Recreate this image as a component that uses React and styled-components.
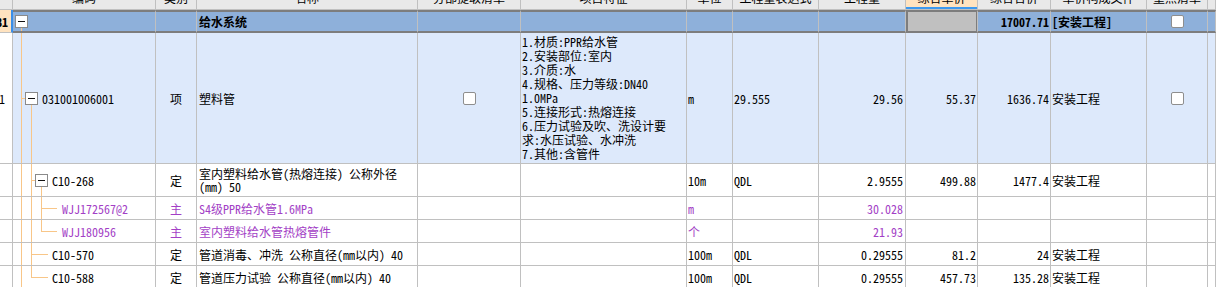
import React from 'react';
import styled, { createGlobalStyle } from 'styled-components';

const GlobalStyle = createGlobalStyle`
  html, body {
    margin: 0;
    padding: 0;
    background: #fff;
  }
  body {
    font-family: "Noto Sans Mono CJK SC", "Noto Sans CJK SC", "Liberation Mono", monospace;
    font-size: 12px;
    color: #000;
    overflow: hidden;
  }
`;

const COLS = '13px 143px 41px 221px 103px 166px 46px 86px 87px 72px 73px 96px 61px 8px';
const GRID = '#c0c0c0';
const DARK = '#7d7d7d';
const GUIDE = '#f8c688';
const PURPLE = '#a33fc6';

const Sheet = styled.div`
  width: 1216px;
  height: 287px;
  overflow: hidden;
  background: #fff;
`;

const Row = styled.div`
  display: grid;
  grid-template-columns: ${COLS};
  height: ${({ h }) => h}px;
`;

const HeadCell = styled.div`
  display: flex;
  align-items: flex-end;
  justify-content: center;
  overflow: hidden;
  box-sizing: border-box;
  height: 10px;
  padding-bottom: 5px;
  line-height: 12px;
  white-space: nowrap;
  background: ${({ active }) => (active ? '#ffe3c0' : '#e9e9e9')};
  border-right: 1px solid ${GRID};
  border-bottom: 1px solid ${GRID};
  box-shadow: ${({ active }) => (active ? 'inset 0 -2px 0 #3d99ef' : 'none')};
`;

const Cell = styled.div`
  display: flex;
  align-items: center;
  justify-content: ${({ align }) =>
    align === 'right' ? 'flex-end' : align === 'center' ? 'center' : 'flex-start'};
  box-sizing: border-box;
  min-width: 0;
  overflow: hidden;
  padding-left: ${({ pl }) => pl || 0}px;
  padding-right: ${({ pr }) => pr || 0}px;
  white-space: nowrap;
  color: ${({ purple }) => (purple ? PURPLE : '#000')};
  font-weight: ${({ bold }) => (bold ? 700 : 400)};
  background-color: ${({ bg }) => bg || '#fff'};
  border-right: 1px solid ${GRID};
  border-bottom: 1px solid ${GRID};
  ${({ group }) =>
    group &&
    `border-top: 2px solid ${DARK}; border-bottom: 2px solid ${DARK};`}
`;

const IndexCell = styled(Cell)`
  ${({ group }) =>
    group &&
    `background-color: #ffe3c0; border-top: none; border-bottom: 1px solid ${GRID}; border-right: 2px solid #3a8ee8;`}
`;

const PriceCell = styled(Cell)`
  ${({ group }) =>
    group &&
    `background-color: #c0c0c0; box-shadow: inset 2px 0 0 ${DARK}, inset -1px 0 0 ${DARK};`}
`;

const TreeCell = styled(Cell)`
  background-image: ${({ guides }) => guides.map(() => `linear-gradient(${GUIDE}, ${GUIDE})`).join(', ') || 'none'};
  background-position: ${({ guides }) => guides.map((g) => `${g.x}px ${g.y}`).join(', ') || '0 0'};
  background-size: ${({ guides }) => guides.map((g) => `${g.w} ${g.h}`).join(', ') || 'auto'};
  background-repeat: no-repeat;
`;

const Lines = styled.div`
  display: flex;
  flex-direction: column;
  line-height: ${({ lh }) => lh}px;
`;

const Toggle = styled.span`
  display: inline-flex;
  align-items: center;
  justify-content: center;
  flex: none;
  width: 13px;
  height: 13px;
  box-sizing: border-box;
  margin-right: 4px;
  border: 1px solid #8a8a8a;
  background: #fff;

  &::after {
    content: '';
    width: 7px;
    height: 1px;
    background: #111;
  }
`;

const Check = styled.span`
  display: inline-block;
  width: 13px;
  height: 13px;
  box-sizing: border-box;
  border: 1px solid #8e8e8e;
  border-radius: 2px;
  background: #fff;
`;

// tree guide segments, x relative to the code cell
const full = (x) => ({ x, y: '0', w: '1px', h: '100%' });
const top = (x) => ({ x, y: '0', w: '1px', h: '50%' });
const below = (x) => ({ x, y: '100%', w: '1px', h: 'calc(50% - 6px)' });
const join = (x1, x2) => ({ x: x1, y: '50%', w: `${x2 - x1}px`, h: '1px' });

const headers = [
  '', '编码', '类别', '名称', '分部提取清单', '项目特征', '单位',
  '工程量表达式', '工程量', '综合单价', '综合合价', '单价构成文件', '重点清单', '',
];

const rows = [
  {
    h: 23, group: true, bg: '#8eb0da', index: 'B1', indexPad: 3, bold: true,
    code: '', indent: 2, toggle: true, guides: [below(8)],
    type: '', name: '给水系统', check4: false, feature: null, unit: '', expr: '',
    qty: '', price: '', total: '17007.71', file: '[安装工程]', check12: true,
  },
  {
    h: 131, bg: '#dde9fb', index: '1', indexPad: 7,
    code: '031001006001', indent: 12, toggle: true,
    guides: [full(8), join(8, 12), below(18)],
    type: '项', name: '塑料管', check4: true,
    feature: [
      '1.材质:PPR给水管', '2.安装部位:室内', '3.介质:水', '4.规格、压力等级:DN40',
      '1.0MPa', '5.连接形式:热熔连接', '6.压力试验及吹、洗设计要', '求:水压试验、水冲洗',
      '7.其他:含管件',
    ],
    unit: 'm', expr: '29.555', qty: '29.56', price: '55.37', total: '1636.74',
    file: '安装工程', check12: true,
  },
  {
    h: 33, code: 'C10-268', indent: 22, toggle: true,
    guides: [full(8), full(18), join(18, 22), below(28)],
    type: '定', name: ['室内塑料给水管(热熔连接) 公称外径', '(mm) 50'],
    unit: '10m', expr: 'QDL', qty: '2.9555', price: '499.88', total: '1477.4', file: '安装工程',
  },
  {
    h: 23, purple: true, code: 'WJJ172567@2', indent: 49,
    guides: [full(8), full(18), full(28), join(28, 44)],
    type: '主', name: 'S4级PPR给水管1.6MPa', unit: 'm', qty: '30.028',
  },
  {
    h: 23, purple: true, code: 'WJJ180956', indent: 49,
    guides: [full(8), full(18), top(28), join(28, 44)],
    type: '主', name: '室内塑料给水管热熔管件', unit: '个', qty: '21.93',
  },
  {
    h: 23, code: 'C10-570', indent: 39,
    guides: [full(8), full(18), join(18, 35)],
    type: '定', name: '管道消毒、冲洗 公称直径(mm以内) 40',
    unit: '100m', expr: 'QDL', qty: '0.29555', price: '81.2', total: '24', file: '安装工程',
  },
  {
    h: 23, code: 'C10-588', indent: 39,
    guides: [full(8), top(18), join(18, 35)],
    type: '定', name: '管道压力试验 公称直径(mm以内) 40',
    unit: '100m', expr: 'QDL', qty: '0.29555', price: '457.73', total: '135.28', file: '安装工程',
  },
];

const Multi = ({ value, lh }) =>
  Array.isArray(value) ? (
    <Lines lh={lh}>
      {value.map((line, i) => (
        <span key={i}>{line}</span>
      ))}
    </Lines>
  ) : (
    value || null
  );

const DataRow = ({ r }) => {
  const common = { bg: r.bg, group: r.group, purple: r.purple, bold: r.bold };
  return (
    <Row h={r.h}>
      <IndexCell align="right" pr={r.indexPad} group={r.group} bold={r.bold}>
        {r.index}
      </IndexCell>
      <TreeCell {...common} pl={r.indent} guides={r.guides}>
        {r.toggle && <Toggle />}
        {r.code}
      </TreeCell>
      <Cell {...common} align="center">{r.type}</Cell>
      <Cell {...common} pl={2}>
        <Multi value={r.name} lh={13} />
      </Cell>
      <Cell {...common} align="center">{r.check4 && <Check />}</Cell>
      <Cell {...common} pl={1}>
        <Multi value={r.feature} lh={14} />
      </Cell>
      <Cell {...common} pl={1}>{r.unit}</Cell>
      <Cell {...common} pl={1}>{r.expr}</Cell>
      <Cell {...common} align="right" pr={2}>{r.qty}</Cell>
      <PriceCell {...common} align="right" pr={1}>{r.price}</PriceCell>
      <Cell {...common} align="right" pr={1}>{r.total}</Cell>
      <Cell {...common} pl={1}>{r.file}</Cell>
      <Cell {...common} align="center">{r.check12 && <Check />}</Cell>
      <Cell {...common} />
    </Row>
  );
};

export default function App() {
  return (
    <>
      <GlobalStyle />
      <Sheet>
        <Row h={10}>
          {headers.map((h, i) => (
            <HeadCell key={i} active={i === 9}>
              {h}
            </HeadCell>
          ))}
        </Row>
        {rows.map((r, i) => (
          <DataRow key={i} r={r} />
        ))}
      </Sheet>
    </>
  );
}
